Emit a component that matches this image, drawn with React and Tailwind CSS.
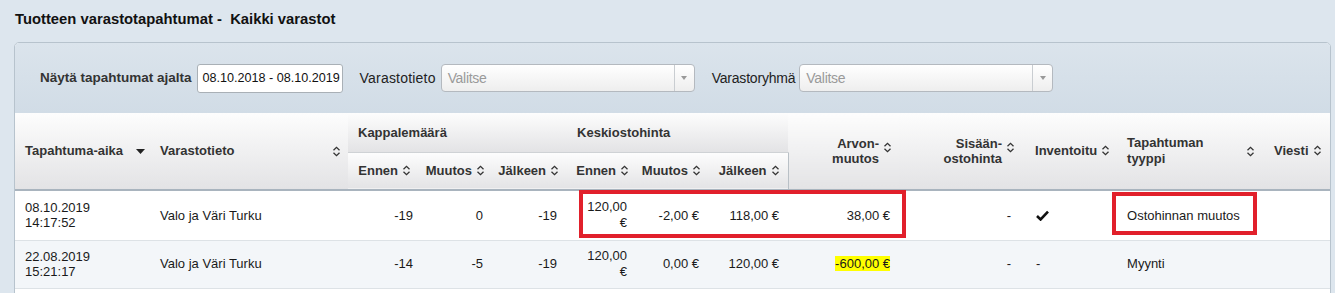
import React from 'react';

const SortIcon = () => (
  <svg className="inline-block w-[9px] h-[11px] align-[-1px] ml-[4px]" viewBox="0 0 9 11" fill="none" stroke="#333" strokeWidth="1.3">
    <path d="M1.5 4.2 L4.5 1.3 L7.5 4.2" />
    <path d="M1.5 6.8 L4.5 9.7 L7.5 6.8" />
  </svg>
);

const Caret = () => (
  <svg className="w-[9px] h-[5px]" viewBox="0 0 9 5">
    <path d="M0 0 H9 L4.5 5 Z" fill="#222" />
  </svg>
);

const SelectBox = ({ width }) => (
  <div className={`flex h-[28px] ${width} items-stretch rounded-[4px] border border-[#b4b9bf] bg-gradient-to-b from-white to-[#eeeeee]`}>
    <span className="flex-1 self-center pl-[6px] text-[14px] text-[#9a9a9a] tracking-[-0.3px]">Valitse</span>
    <span className="flex w-[20px] items-center justify-center border-l border-[#c9cdd1]">
      <svg className="w-[6px] h-[4px]" viewBox="0 0 6 4"><path d="M0 0 H6 L3 4 Z" fill="#999" /></svg>
    </span>
  </div>
);

const thBase = 'bg-gradient-to-b from-[#fdfdfd] to-[#e3e3e5] text-[13px] font-bold text-[#333] align-middle';

export default function App() {
  const rows = [
    { date: '08.10.2019', time: '14:17:52', store: 'Valo ja Väri Turku', qb: '-19', qm: '0', qa: '-19', pb: '120,00 €', pm: '-2,00 €', pa: '118,00 €', value: '38,00 €', in: '-', inv: true, type: 'Ostohinnan muutos' },
    { date: '22.08.2019', time: '15:21:17', store: 'Valo ja Väri Turku', qb: '-14', qm: '-5', qa: '-19', pb: '120,00 €', pm: '0,00 €', pa: '120,00 €', value: '-600,00 €', highlight: true, in: '-', inv: false, type: 'Myynti' },
  ];

  return (
    <div className="min-h-screen bg-[#dde6ee] font-['Liberation_Sans',Arial,sans-serif] text-[#1a1a1a]">
      <h1 className="px-[15px] pt-[10px] pb-[13px] text-[14.8px] leading-[19px] font-bold text-[#111]">
        Tuotteen varastotapahtumat -&nbsp; Kaikki varastot
      </h1>

      <div className="ml-[14px] mr-[4px] overflow-hidden rounded-t-[5px] border border-[#b7c3cd] bg-white">
        {/* Filters */}
        <div className="flex h-[70px] items-center bg-gradient-to-b from-[#dbe4ec] to-[#d1dce6] pl-[25px]">
          <label className="mr-[5px] text-[13.5px] font-bold text-[#333]">Näytä tapahtumat ajalta</label>
          <div className="flex h-[29px] w-[146px] items-center whitespace-nowrap rounded-[3px] border border-[#a9b0b6] bg-white pl-[5px] text-[12.6px] text-[#111]">
            08.10.2018 - 08.10.2019
          </div>
          <label className="ml-[17px] mr-[5px] text-[14px] text-[#222] tracking-[0.2px]">Varastotieto</label>
          <SelectBox width="w-[254px]" />
          <label className="ml-[17px] mr-[4px] text-[14px] text-[#222] tracking-[-0.2px]">Varastoryhmä</label>
          <SelectBox width="w-[254px]" />
        </div>

        {/* Table */}
        <div className="relative">
          <table className="w-full table-fixed border-collapse">
            <colgroup>
              <col className="w-[135px]" />
              <col className="w-[198px]" />
              <col className="w-[75px]" />
              <col className="w-[70px]" />
              <col className="w-[74px]" />
              <col className="w-[70px]" />
              <col className="w-[72px]" />
              <col className="w-[79px]" />
              <col className="w-[112px]" />
              <col className="w-[125px]" />
              <col className="w-[93px]" />
              <col className="w-[147px]" />
              <col className="w-[65px]" />
            </colgroup>
            <thead>
              <tr className="h-[39px]">
                <th rowSpan={2} className={`${thBase} border-b-2 border-[#a9b4be] pl-[10px] text-left`}>
                  <div className="flex items-center justify-between pr-[5px]">
                    <span>Tapahtuma-aika</span>
                    <Caret />
                  </div>
                </th>
                <th rowSpan={2} className={`${thBase} border-b-2 border-[#a9b4be] pl-[10px] pr-[7px] text-left`}>
                  <div className="flex items-center justify-between">
                    <span>Varastotieto</span>
                    <SortIcon />
                  </div>
                </th>
                <th colSpan={3} className={`${thBase} border-b border-[#cfd2d5] pl-[10px] text-left`}>Kappalemäärä</th>
                <th colSpan={3} className={`${thBase} border-b border-[#cfd2d5] pl-[10px] text-left`}>Keskiostohinta</th>
                <th rowSpan={2} className={`${thBase} border-b-2 border-[#a9b4be] pr-[8px] text-right leading-[15px]`}>
                  <div className="inline-flex items-start">
                    <span className="text-right">Arvon-<br />muutos</span>
                    <span className="mt-[4px]"><SortIcon /></span>
                  </div>
                </th>
                <th rowSpan={2} className={`${thBase} border-b-2 border-[#a9b4be] pr-[10px] text-right leading-[15px]`}>
                  <div className="inline-flex items-start">
                    <span className="text-right">Sisään-<br />ostohinta</span>
                    <span className="mt-[4px]"><SortIcon /></span>
                  </div>
                </th>
                <th rowSpan={2} className={`${thBase} border-b-2 border-[#a9b4be] pl-[10px] text-left`}>
                  Inventoitu<SortIcon />
                </th>
                <th rowSpan={2} className={`${thBase} border-b-2 border-[#a9b4be] pl-[9px] pr-[10px] text-left leading-[16px]`}>
                  <div className="flex items-center justify-between">
                    <span>Tapahtuman<br />tyyppi</span>
                    <SortIcon />
                  </div>
                </th>
                <th rowSpan={2} className={`${thBase} border-b-2 border-[#a9b4be] pl-[9px] text-left`}>
                  Viesti<SortIcon />
                </th>
              </tr>
              <tr className="h-[38px]">
                {['Ennen', 'Muutos', 'Jälkeen', 'Ennen', 'Muutos', 'Jälkeen'].map((label, i) => (
                  <th
                    key={i}
                    className={`${thBase} border-b-2 border-[#a9b4be] text-right whitespace-nowrap ${i === 0 ? 'pr-[12px]' : 'pr-[8px]'} ${i === 5 ? 'border-r border-r-[#b9c0c6]' : ''}`}
                  >
                    {label}<SortIcon />
                  </th>
                ))}
              </tr>
            </thead>
            <tbody className="text-[13px] text-[#1a1a1a]">
              {rows.map((r, i) => (
                <tr key={i} className={`border-b border-[#dde2e6] ${i % 2 === 1 ? 'bg-[#f3f6f9]' : 'bg-white'} ${i === 0 ? 'h-[50px]' : 'h-[48px]'}`}>
                  <td className="pl-[10px] leading-[15px]">{r.date}<br />{r.time}</td>
                  <td className="pl-[10px]">{r.store}</td>
                  <td className="pr-[10px] text-right">{r.qb}</td>
                  <td className="pr-[10px] text-right">{r.qm}</td>
                  <td className="pr-[10px] text-right">{r.qa}</td>
                  <td className="pl-[10px] pr-[10px] text-right leading-[16px]">{r.pb}</td>
                  <td className="pr-[10px] text-right">{r.pm}</td>
                  <td className="pr-[9px] text-right">{r.pa}</td>
                  <td className="pr-[10px] text-right">
                    {r.highlight ? <span className="bg-[#ffff00]">{r.value}</span> : r.value}
                  </td>
                  <td className="pr-[14px] text-right">{r.in}</td>
                  <td className="pl-[11px]">
                    {r.inv ? (
                      <svg className="w-[13px] h-[11px]" viewBox="0 0 13 11">
                        <path d="M1 6 L4.6 9.5 L12 1.6" fill="none" stroke="#111" strokeWidth="2.6" />
                      </svg>
                    ) : (
                      '-'
                    )}
                  </td>
                  <td className="pl-[9px]">{r.type}</td>
                  <td />
                </tr>
              ))}
              <tr className="h-[48px] bg-white">
                <td colSpan={13} />
              </tr>
            </tbody>
          </table>

          {/* annotation boxes */}
          <div className="pointer-events-none absolute left-[564px] top-[77px] h-[48px] w-[327px] border-[4px] border-[#e1202b]" />
          <div className="pointer-events-none absolute left-[1097px] top-[79px] h-[43px] w-[145px] border-[4px] border-[#e1202b]" />
        </div>
      </div>
    </div>
  );
}
